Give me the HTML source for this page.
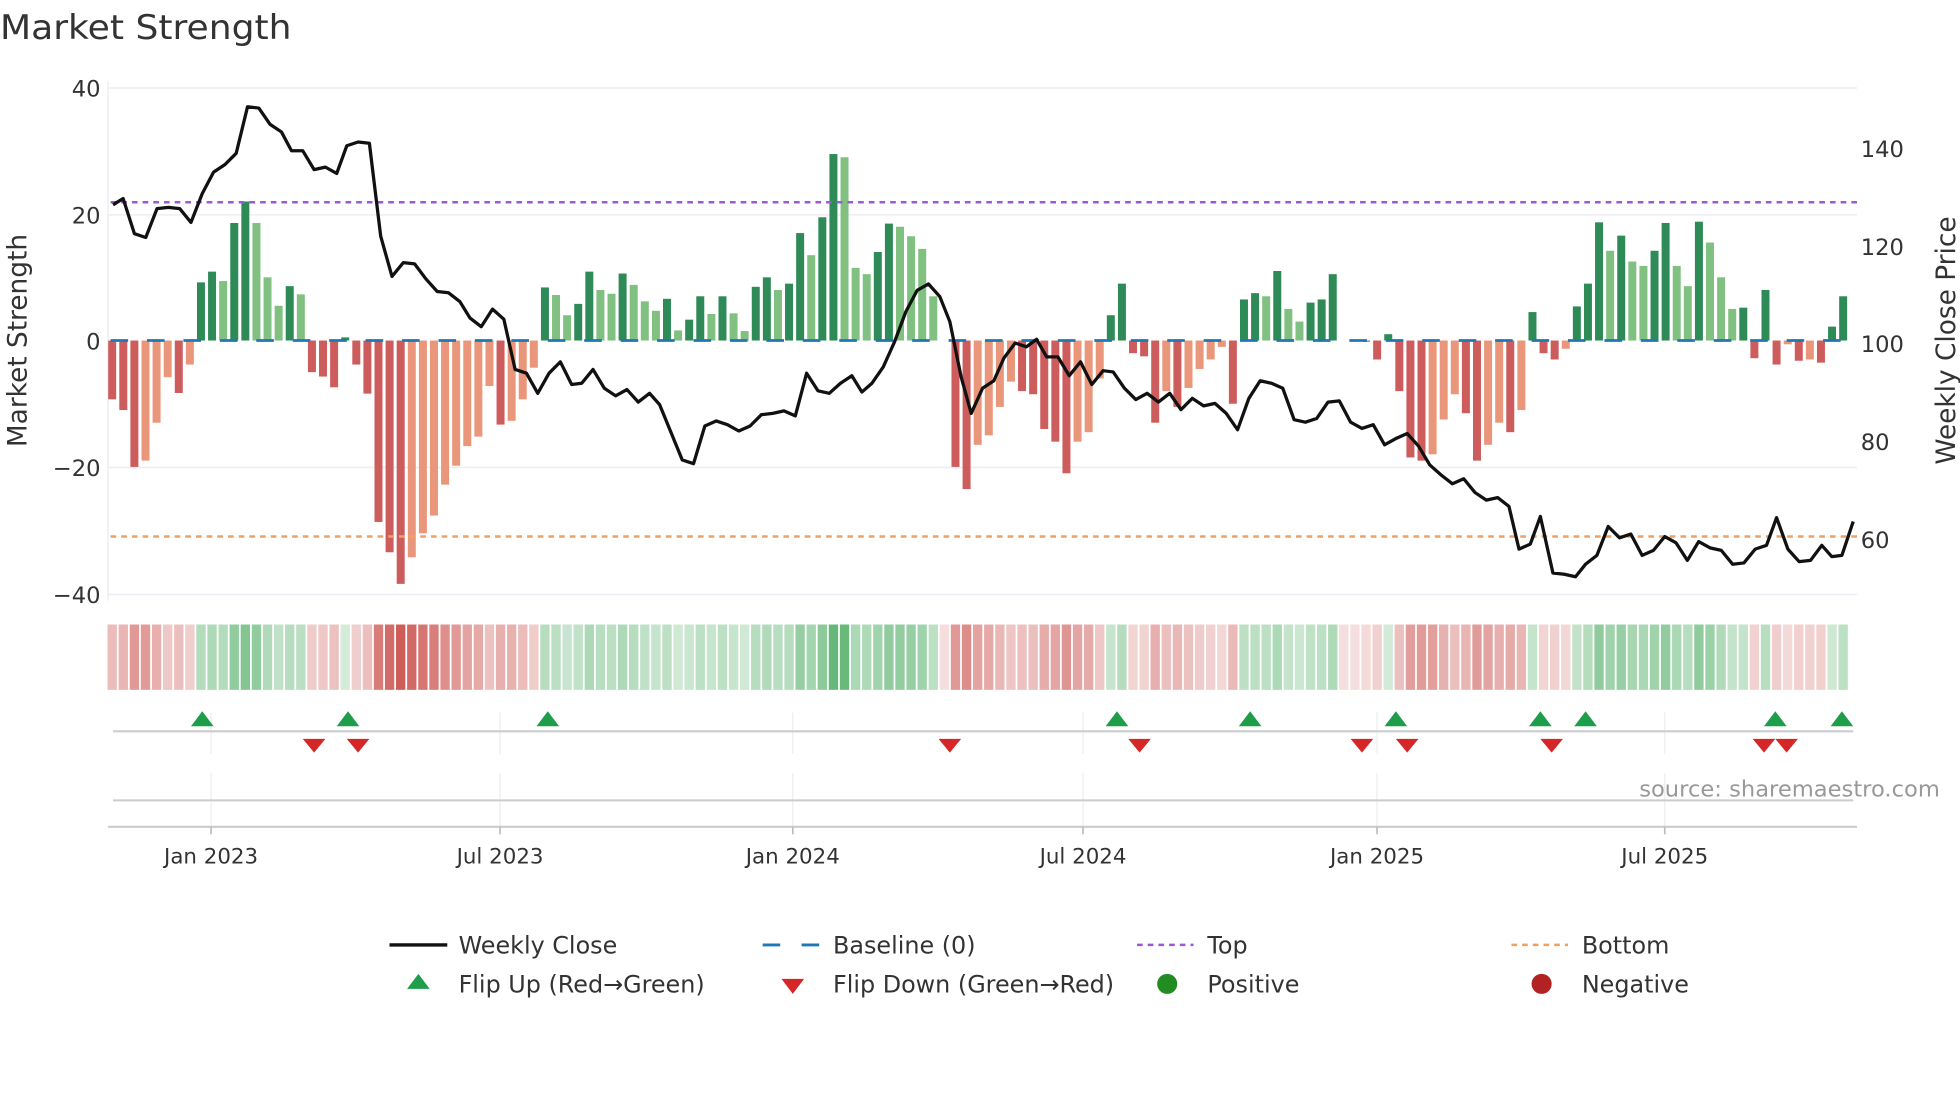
<!DOCTYPE html>
<html><head><meta charset="utf-8">
<style>
html,body{margin:0;padding:0;background:#fff;}
svg{display:block;}
text{font-family:"DejaVu Sans","Liberation Sans",sans-serif;}
</style></head>
<body>
<svg id="s" width="1960" height="1102" viewBox="0 0 1560 877" preserveAspectRatio="none" xmlns="http://www.w3.org/2000/svg">
<rect width="1560" height="877" fill="#fff"/>
<text x="0" y="31" font-size="27" fill="#333" textLength="232" lengthAdjust="spacingAndGlyphs">Market Strength</text>
<!-- grid -->
<g stroke="#eceef4" stroke-width="1.2">
<line x1="86" y1="70" x2="1478" y2="70"/>
<line x1="86" y1="171" x2="1478" y2="171"/>
<line x1="86" y1="372" x2="1478" y2="372"/>
<line x1="86" y1="473" x2="1478" y2="473"/>
<line x1="86" y1="65" x2="86" y2="478"/>
</g>
<g id="bars"></g>
<line x1="88" y1="271" x2="1478" y2="271" stroke="#1f77b4" stroke-width="2.2" stroke-dasharray="14,15"/>
<line x1="88" y1="161" x2="1478" y2="161" stroke="#9b59d6" stroke-width="2" stroke-dasharray="4.5,4"/>
<line x1="88" y1="427" x2="1478" y2="427" stroke="#f0a060" stroke-width="2" stroke-dasharray="4.5,4"/>
<polyline id="price" fill="none" stroke="#111" stroke-width="2.6" stroke-linejoin="round"/>
<g id="heat"></g>
<!-- left axis labels -->
<g font-size="18" fill="#333" text-anchor="end">
<text x="80" y="77">40</text>
<text x="80" y="178">20</text>
<text x="80" y="278">0</text>
<text x="80" y="379">−20</text>
<text x="80" y="480">−40</text>
</g>
<g font-size="18" fill="#333">
<text x="1481" y="125">140</text>
<text x="1481" y="203">120</text>
<text x="1481" y="280">100</text>
<text x="1481" y="358">80</text>
<text x="1481" y="436">60</text>
</g>
<text transform="translate(21,271) rotate(-90)" font-size="21" fill="#333" text-anchor="middle">Market Strength</text>
<text transform="translate(1556,271) rotate(-90)" font-size="21" fill="#333" text-anchor="middle">Weekly Close Price</text>
<!-- flip area -->
<g stroke="#eef0f3" stroke-width="1.2">
<line x1="168" y1="567" x2="168" y2="600"/><line x1="398" y1="567" x2="398" y2="600"/>
<line x1="631" y1="567" x2="631" y2="600"/><line x1="862" y1="567" x2="862" y2="600"/>
<line x1="1096" y1="567" x2="1096" y2="600"/><line x1="1325" y1="567" x2="1325" y2="600"/>
<line x1="168" y1="615" x2="168" y2="658"/><line x1="398" y1="615" x2="398" y2="658"/>
<line x1="631" y1="615" x2="631" y2="658"/><line x1="862" y1="615" x2="862" y2="658"/>
<line x1="1096" y1="615" x2="1096" y2="658"/><line x1="1325" y1="615" x2="1325" y2="658"/>
</g>
<line x1="90" y1="582" x2="1475" y2="582" stroke="#ccc" stroke-width="1.6"/>
<line x1="90" y1="637" x2="1475" y2="637" stroke="#ccc" stroke-width="1.6"/>
<g id="flips"></g>
<text x="1544" y="634" font-size="18" fill="#999" text-anchor="end">source: sharemaestro.com</text>
<line x1="86" y1="658" x2="1478" y2="658" stroke="#ccc" stroke-width="1.6"/>
<g stroke="#bbb" stroke-width="1.3">
<line x1="168" y1="658" x2="168" y2="664"/><line x1="398" y1="658" x2="398" y2="664"/>
<line x1="631" y1="658" x2="631" y2="664"/><line x1="862" y1="658" x2="862" y2="664"/>
<line x1="1096" y1="658" x2="1096" y2="664"/><line x1="1325" y1="658" x2="1325" y2="664"/>
</g>
<g font-size="17" fill="#333" text-anchor="middle">
<text x="168" y="687">Jan 2023</text><text x="398" y="687">Jul 2023</text>
<text x="631" y="687">Jan 2024</text><text x="862" y="687">Jul 2024</text>
<text x="1096" y="687">Jan 2025</text><text x="1325" y="687">Jul 2025</text>
</g>
<!-- legend -->
<line x1="310" y1="752" x2="356" y2="752" stroke="#111" stroke-width="2.6"/>
<line x1="607" y1="752" x2="652" y2="752" stroke="#1f77b4" stroke-width="2.2" stroke-dasharray="14,17"/>
<line x1="905" y1="752" x2="950" y2="752" stroke="#9b59d6" stroke-width="2" stroke-dasharray="4.5,4"/>
<line x1="1203" y1="752" x2="1248" y2="752" stroke="#f0a060" stroke-width="2" stroke-dasharray="4.5,4"/>
<polygon points="333,775 342,787 324,787" fill="#1e9e4a"/>
<polygon points="622,779 640,779 631,791" fill="#d62728"/>
<circle cx="929" cy="783" r="8" fill="#228b22"/>
<circle cx="1227" cy="783" r="8" fill="#b22222"/>
<g font-size="19" fill="#333">
<text x="365" y="759">Weekly Close</text>
<text x="663" y="759">Baseline (0)</text>
<text x="961" y="759">Top</text>
<text x="1259" y="759">Bottom</text>
<text x="365" y="790">Flip Up (Red→Green)</text>
<text x="663" y="790">Flip Down (Green→Red)</text>
<text x="961" y="790">Positive</text>
<text x="1259" y="790">Negative</text>
</g>
</svg>
<script>
(function(){
var NS="http://www.w3.org/2000/svg";
var v=[-9.3,-11,-20,-19,-13,-5.8,-8.3,-3.8,9.2,10.9,9.4,18.6,22,18.6,10,5.5,8.6,7.3,-5,-5.7,-7.4,0.5,-3.8,-8.4,-28.7,-33.5,-38.5,-34.3,-30.5,-27.7,-22.8,-19.8,-16.7,-15.2,-7.2,-13.3,-12.7,-9.3,-4.3,8.4,7.2,4,5.8,10.9,8,7.4,10.6,8.8,6.2,4.7,6.6,1.6,3.3,7,4.2,
7,4.3,1.5,8.5,10,8,9,17,13.5,19.5,29.5,29,11.5,10.5,14,18.5,18,16.5,14.5,7,
0,
-20,-23.5,-16.5,-15,-10.5,-6.5,-8,-8.5,-14,-16,-21,-16,-14.5,-6,4,9,-2,-2.5,-13,-8,-10.5,-7.5,-4.5,-3,-1,-10,6.5,7.5,7,11,5,3,6,6.5,10.5,
0,0,
-0.2,-3,1,-8,-18.5,-19,-18,-12.5,-8.5,-11.5,-19,-16.5,-13,-14.5,-11,4.5,-2,-3,-1.3,5.4,9,18.7,14.2,16.6,12.5,11.8,14.2,18.6,11.8,8.6,18.8,15.5,10,5,5.2,-2.8,8,-3.8,-0.6,-3.2,-3,-3.5,2.2,7];
var n=v.length, x0=89.3, x1=1467, sp=(x1-x0)/(n-1), bw=sp*0.72;
var bars=document.getElementById("bars"), heat=document.getElementById("heat");
function r(p,x,y,w,h,f){var e=document.createElementNS(NS,"rect");e.setAttribute("x",x);e.setAttribute("y",y);e.setAttribute("width",w);e.setAttribute("height",h);e.setAttribute("fill",f);p.appendChild(e);}
for(var i=0;i<n;i++){
 var a=v[i],x=x0+i*sp,p=i>0?v[i-1]:0;
 var dark=(a*p<=0)||Math.abs(a)>=Math.abs(p);
 if(a!==0){
  var f=a>0?(dark?"#2e8b57":"#80c080"):(dark?"#cd5c5c":"#e9967a");
  var h=Math.abs(a)*5.03;
  r(bars,x-bw/2,a>0?271-h:271,bw,h,f);
 }
 var t=Math.min(Math.abs(a)/38,1);
 var al=0.2+0.7*t;
 var c=a>0?"rgba(50,160,75,"+al+")":"rgba(200,75,70,"+al+")";
 if(a===0)c="rgba(200,75,70,0.18)";
 r(heat,x-sp/2+0.7,497,sp-1.4,52,c);
}
var pts=[[90,163],[98,158],[107,186],[116,189],[125,166],[134,165],[143,166],[152,177],[161,154],[170,137],[179,131],[188,122],[197,85],[206,86],[215,99],[224,105],[232,120],[241,120],[250,135],[259,133],[268,138],[276,116],[285,113],[294,114],[303,188],[312,220],[321,209],[330,210],[339,222],[348,232],[357,233],[366,240],[374,253],[383,260],[392,246],[401,254],[410,294],[419,297],[428,313],[437,297],[446,288],[455,306],[463,305],[472,294],[481,309],[490,315],[499,310],[508,320],[517,313],[525,322],[534,344],[543,366],[552,369],[561,339],[570,335],[579,338],[588,343],[597,339],[606,330],[615,329],[624,327],[633,331],[642,297],[651,311],[660,313],[669,305],[678,299],[686,312],[694,305],[703,292],[712,272],[721,248],[730,231],[739,226],[748,236],[756,256],[765,300],[773,329],[782,309],[791,303],[799,285],[808,273],[817,276],[825,270],[833,284],[842,284],[851,299],[860,288],[869,306],[878,295],[886,296],[895,309],[904,318],[913,313],[922,320],[931,313],[940,326],[949,317],[958,323],[967,321],[976,329],[985,342],[994,317],[1003,303],[1012,305],[1021,309],[1030,334],[1039,336],[1048,333],[1057,320],[1066,319],[1075,336],[1084,341],[1093,338],[1102,354],[1111,349],[1120,345],[1129,355],[1138,370],[1147,378],[1156,385],[1165,381],[1174,392],[1183,398],[1192,396],[1201,403],[1209,437],[1218,433],[1226,411],[1236,456],[1245,457],[1254,459],[1262,449],[1271,442],[1280,419],[1289,428],[1298,425],[1307,442],[1316,438],[1325,427],[1334,432],[1343,446],[1352,431],[1361,436],[1370,438],[1379,449],[1388,448],[1397,437],[1406,434],[1414,412],[1423,437],[1432,447],[1441,446],[1450,434],[1458,443],[1466,442],[1475,415]];
document.getElementById("price").setAttribute("points",pts.map(function(q){return q.join(",");}).join(" "));
var fl=document.getElementById("flips");
function tri(x,up){var e=document.createElementNS(NS,"polygon");
 e.setAttribute("points",up?(x+","+566+" "+(x+9)+",578 "+(x-9)+",578"):((x-9)+",588 "+(x+9)+",588 "+x+",599"));
 e.setAttribute("fill",up?"#1e9e4a":"#d62728");fl.appendChild(e);}
[161,277,436,889,995,1111,1226,1262,1413,1466].forEach(function(x){tri(x,true);});
[250,285,756,907,1084,1120,1235,1404,1422].forEach(function(x){tri(x,false);});
})();
</script>
</body></html>
